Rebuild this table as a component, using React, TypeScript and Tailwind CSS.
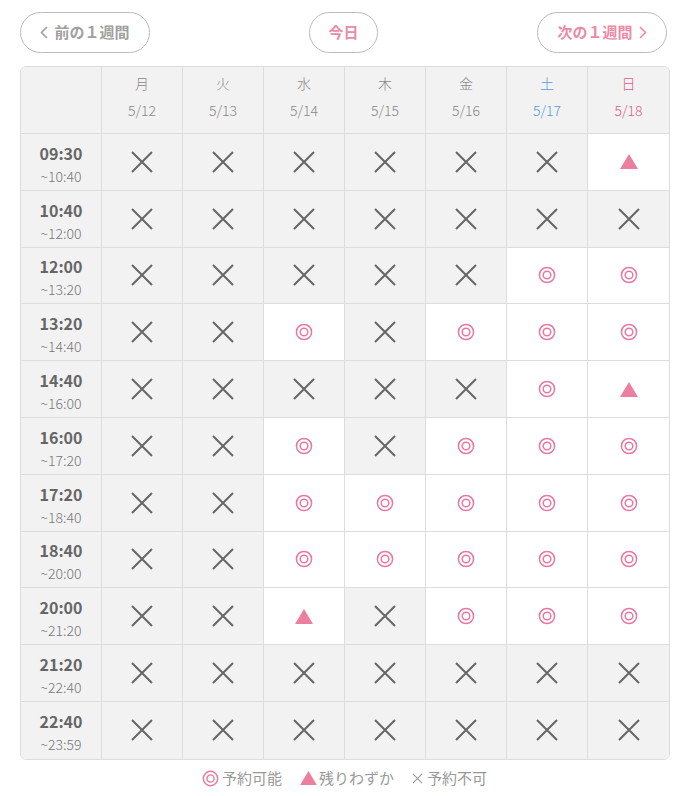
import React from "react";

const font = { fontFamily: '"Noto Sans CJK JP", "Noto Sans", sans-serif' };

const days = [
  { d: "月", date: "5/12", c: "text-[#888]" },
  { d: "火", date: "5/13", c: "text-[#888]" },
  { d: "水", date: "5/14", c: "text-[#888]" },
  { d: "木", date: "5/15", c: "text-[#888]" },
  { d: "金", date: "5/16", c: "text-[#888]" },
  { d: "土", date: "5/17", c: "text-[#5b9bd5]" },
  { d: "日", date: "5/18", c: "text-[#d9607f]" },
];
const rows: { s: string; e: string; v: string }[] = [
  { s: "09:30", e: "~10:40", v: "XXXXXXT" },
  { s: "10:40", e: "~12:00", v: "XXXXXXX" },
  { s: "12:00", e: "~13:20", v: "XXXXXOO" },
  { s: "13:20", e: "~14:40", v: "XXOXOOO" },
  { s: "14:40", e: "~16:00", v: "XXXXXOT" },
  { s: "16:00", e: "~17:20", v: "XXOXOOO" },
  { s: "17:20", e: "~18:40", v: "XXOOOOO" },
  { s: "18:40", e: "~20:00", v: "XXOOOOO" },
  { s: "20:00", e: "~21:20", v: "XXTXOOO" },
  { s: "21:20", e: "~22:40", v: "XXXXXXX" },
  { s: "22:40", e: "~23:59", v: "XXXXXXX" },
];

const Cross = ({ size = 24, sw = 2, color = "#666" }: { size?: number; sw?: number; color?: string }) => (
  <svg width={size} height={size} viewBox="0 0 24 24">
    <path d="M2 2L22 22M22 2L2 22" stroke={color} strokeWidth={sw} fill="none" />
  </svg>
);
const Circle = ({ size = 18 }: { size?: number }) => (
  <svg width={size} height={size} viewBox="0 0 18 18">
    <circle cx="9" cy="9" r="7.6" stroke="#e8799c" strokeWidth="1.5" fill="none" />
    <circle cx="9" cy="9" r="3.8" stroke="#e8799c" strokeWidth="1.5" fill="none" />
  </svg>
);
const Tri = ({ w = 18, h = 15 }: { w?: number; h?: number }) => (
  <svg width={w} height={h} viewBox="0 0 18 15">
    <path d="M9 0L18 15H0Z" fill="#ec7f9f" />
  </svg>
);

export default function App() {
  return (
    <div className="bg-white w-[697px] h-[796px]" style={font}>
      <div className="flex items-center justify-between pl-[20px] pr-[30px] pt-[12px] h-[53px]">
        <button className="w-[130px] h-[41px] rounded-full border border-[#bbb] text-[#a0a0a0] font-bold text-[15px] flex items-center justify-center gap-[6px]">
          <svg width="8" height="13" viewBox="0 0 8 13"><path d="M7 1L1.5 6.5L7 12" stroke="#a0a0a0" strokeWidth="1.6" fill="none" /></svg>
          <span>前の１週間</span>
        </button>
        <button className="w-[69px] h-[41px] rounded-full border border-[#bbb] text-[#ec8aa6] font-bold text-[15px] flex items-center justify-center">
          今日
        </button>
        <button className="w-[130px] h-[41px] rounded-full border border-[#bbb] text-[#ec8aa6] font-bold text-[15px] flex items-center justify-center gap-[6px]">
          <span>次の１週間</span>
          <svg width="8" height="13" viewBox="0 0 8 13"><path d="M1 1L6.5 6.5L1 12" stroke="#ec8aa6" strokeWidth="1.6" fill="none" /></svg>
        </button>
      </div>
      <div className="ml-[20px] mt-[13px] w-[650px] border border-[#ddd] rounded-[6px] overflow-hidden">
        <div className="grid grid-cols-[81px_repeat(7,81px)]">
          <div className="h-[67px] bg-[#f2f2f2] border-r border-b border-[#ddd]" />
          {days.map((d, i) => (
            <div key={i} className={`h-[67px] bg-[#f2f2f2] border-b border-[#ddd] ${i < 6 ? "border-r" : ""} flex flex-col items-center pt-[6px] text-[14px] font-light ${d.c}`}>
              <span className="leading-[20px]">{d.d}</span>
              <span className="leading-[20px] mt-[7px]">{d.date}</span>
            </div>
          ))}
          {rows.map((r, ri) => (
            <React.Fragment key={ri}>
              <div className={`h-[56.8px] bg-[#f2f2f2] border-r border-[#ddd] ${ri < rows.length - 1 ? "border-b" : ""} flex flex-col items-center justify-center pt-[5px] text-[#666]`}>
                <span className="font-bold text-[16px] leading-[20px]">{r.s}</span>
                <span className="text-[14px] leading-[20px] mt-[3px] font-light text-[#777]">{r.e}</span>
              </div>
              {r.v.split("").map((v, ci) => (
                <div
                  key={ci}
                  className={`h-[56.8px] border-[#ddd] ${ci < 6 ? "border-r" : ""} ${ri < rows.length - 1 ? "border-b" : ""} ${v === "X" ? "bg-[#f2f2f2]" : "bg-white"} flex items-center justify-center`}
                >
                  {v === "X" ? <Cross /> : v === "O" ? <Circle /> : <Tri />}
                </div>
              ))}
            </React.Fragment>
          ))}
        </div>
      </div>
      <div className="flex items-center justify-center gap-[18px] mt-[7px] text-[15px] text-[#999] pr-[8px]">
        <div className="flex items-center gap-[3px]"><Circle size={17} /><span>予約可能</span></div>
        <div className="flex items-center gap-[2px]"><Tri w={17} h={14} /><span>残りわずか</span></div>
        <div className="flex items-center gap-[4px]"><Cross size={11} sw={2.4} color="#999" /><span>予約不可</span></div>
      </div>
    </div>
  );
}
